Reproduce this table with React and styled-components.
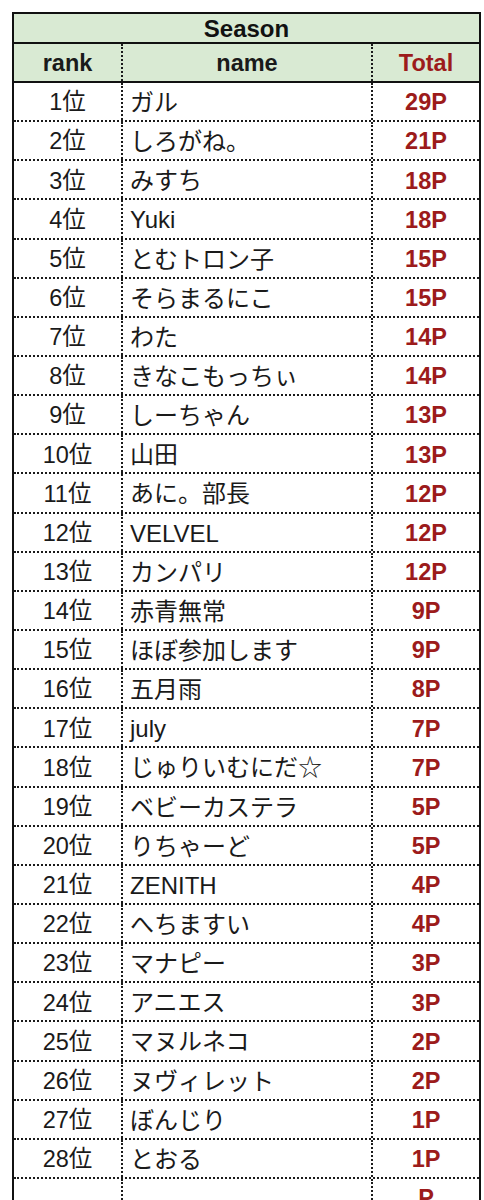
import React from "react";
import styled, { createGlobalStyle } from "styled-components";

const Global = createGlobalStyle`
  html, body { margin: 0; padding: 0; background: #ffffff; }
  body { font-family: "Liberation Sans", "Noto Sans CJK JP", Arial, sans-serif; overflow: hidden; }
  * { box-sizing: border-box; }
`;

const Page = styled.div`
  padding: 12px 0 0 12px;
`;

const Table = styled.div`
  width: 469px;
  border: 2px solid #111;
  border-bottom: none;
  display: flex;
  flex-direction: column;
`;

const TitleRow = styled.div`
  height: 30px;
  background: #d9ead3;
  border-bottom: 2px solid #111;
  display: flex;
  align-items: center;
  justify-content: center;
  font-weight: 700;
  font-size: 24px;
  color: #111;
  padding-top: 2px;
`;

const Row = styled.div`
  display: grid;
  grid-template-columns: 109px 250px 1fr;
  height: ${(p) => (p.$head ? "39px" : "39.15px")};
  background: ${(p) => (p.$head ? "#d9ead3" : "#ffffff")};
  border-bottom: ${(p) => (p.$head ? "2px solid #111" : "2px dotted #1a1a1a")};
`;

const Cell = styled.div`
  display: flex;
  align-items: center;
  justify-content: ${(p) => (p.$left ? "flex-start" : "center")};
  padding-left: ${(p) => (p.$left ? "7px" : "0")};
  padding-top: 3px;
  border-right: ${(p) => (p.$last ? "none" : "2px dotted #1a1a1a")};
  font-size: ${(p) => (p.$left ? "24px" : "23.5px")};
  font-weight: ${(p) => (p.$bold ? 700 : 400)};
  color: ${(p) => (p.$red ? "#9c1b1b" : "#1a1a1a")};
  white-space: nowrap;
  overflow: hidden;
  line-height: 1;
`;

const data = [
  ["ガル", "29P"],
  ["しろがね。", "21P"],
  ["みすち", "18P"],
  ["Yuki", "18P"],
  ["とむトロン子", "15P"],
  ["そらまるにこ", "15P"],
  ["わた", "14P"],
  ["きなこもっちぃ", "14P"],
  ["しーちゃん", "13P"],
  ["山田", "13P"],
  ["あに。部長", "12P"],
  ["VELVEL", "12P"],
  ["カンパリ", "12P"],
  ["赤青無常", "9P"],
  ["ほぼ参加します", "9P"],
  ["五月雨", "8P"],
  ["july", "7P"],
  ["じゅりいむにだ☆", "7P"],
  ["ベビーカステラ", "5P"],
  ["りちゃーど", "5P"],
  ["ZENITH", "4P"],
  ["へちますい", "4P"],
  ["マナピー", "3P"],
  ["アニエス", "3P"],
  ["マヌルネコ", "2P"],
  ["ヌヴィレット", "2P"],
  ["ぼんじり", "1P"],
  ["とおる", "1P"],
];

export default function App() {
  return (
    <>
      <Global />
      <Page>
        <Table>
          <TitleRow>Season</TitleRow>
          <Row $head>
            <Cell $bold>rank</Cell>
            <Cell $bold>name</Cell>
            <Cell $bold $red $last>Total</Cell>
          </Row>
          {data.map(([name, pts], i) => (
            <Row key={i}>
              <Cell>{i + 1}位</Cell>
              <Cell $left>{name}</Cell>
              <Cell $bold $red $last>{pts}</Cell>
            </Row>
          ))}
          <Row>
            <Cell></Cell>
            <Cell $left></Cell>
            <Cell $bold $red $last>P</Cell>
          </Row>
        </Table>
      </Page>
    </>
  );
}
